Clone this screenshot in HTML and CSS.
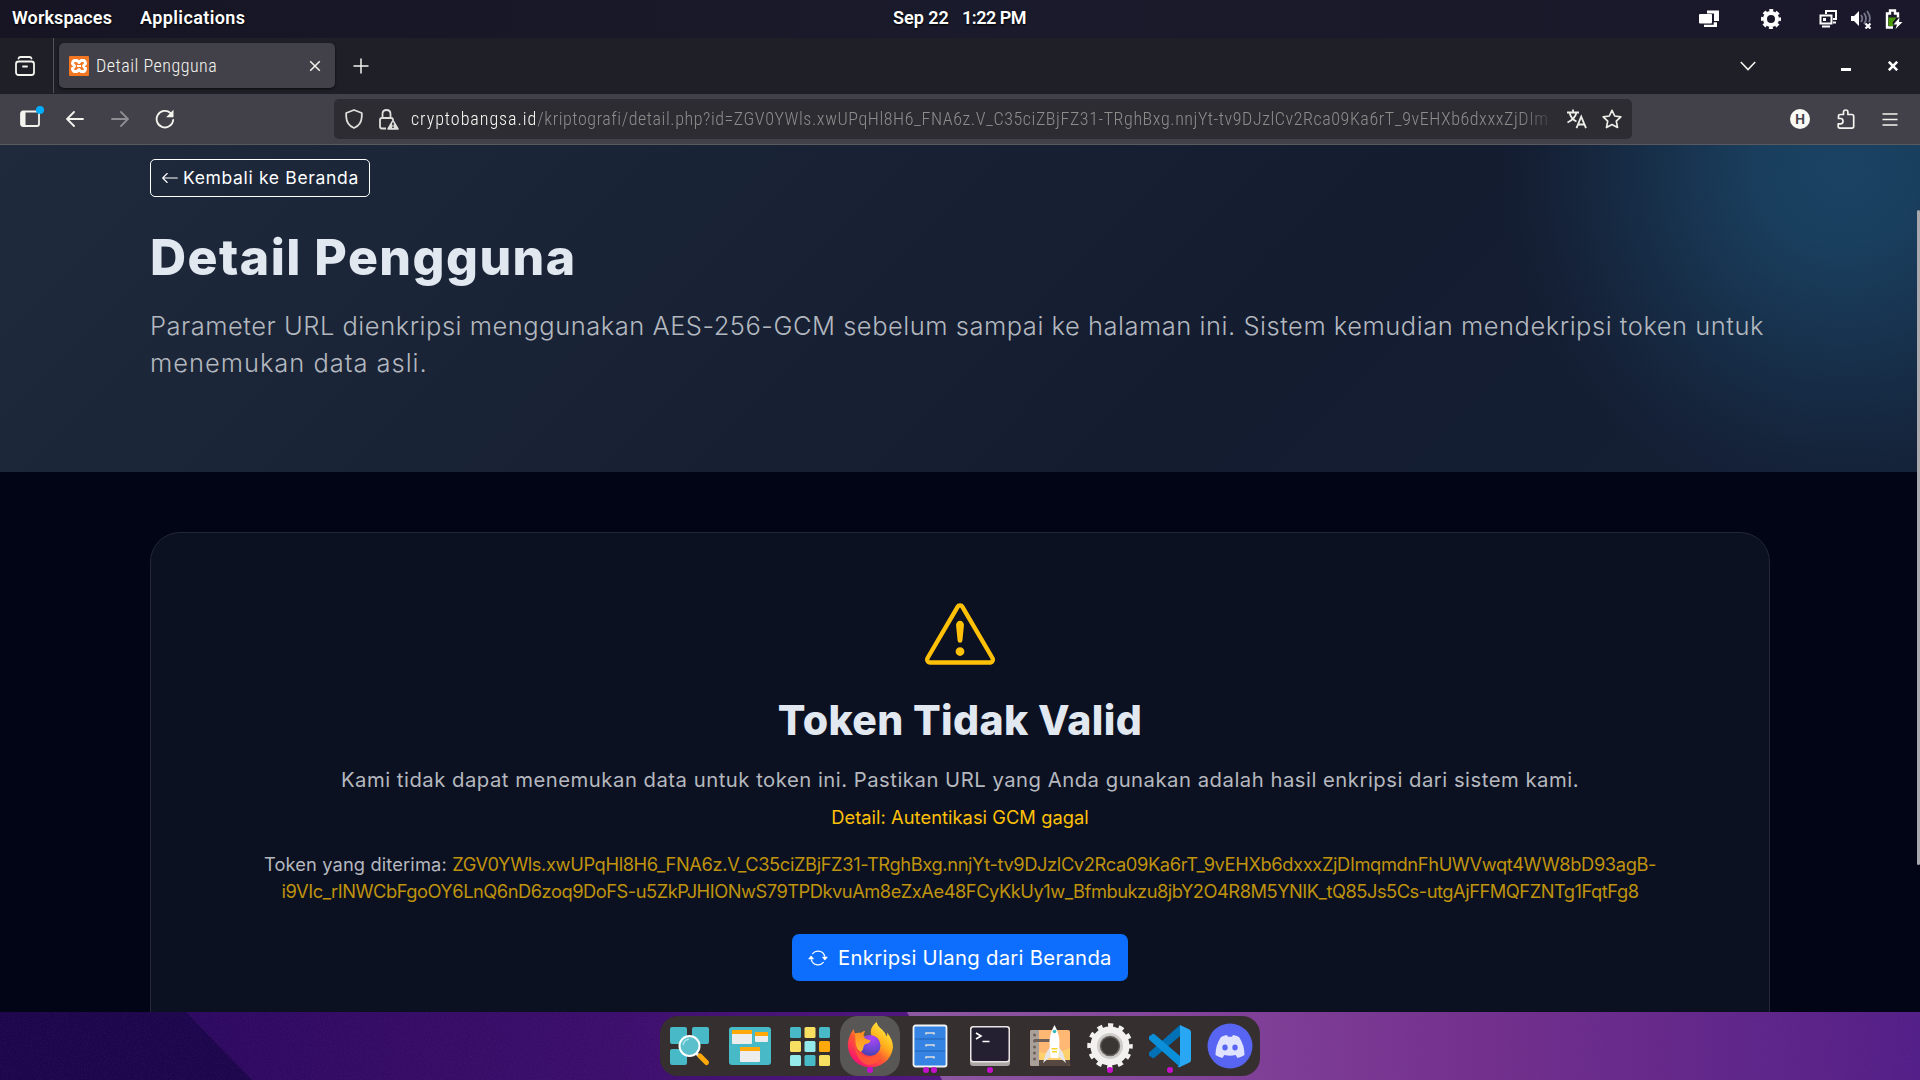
FILE: index.html
```html
<!DOCTYPE html>
<html lang="id">
<head>
<meta charset="utf-8">
<title>Detail Pengguna</title>
<link rel="stylesheet" href="styles.css">
</head>
<body>
<div class="desktop">
  <header class="panel">
    <nav class="panel-menu"><span class="panel-ws">Workspaces</span><span class="panel-apps">Applications</span></nav>
    <div class="panel-clock"><span class="panel-date">Sep 22</span><span class="panel-time">1:22 PM</span></div>
    <div class="panel-tray">
      <svg width="20" height="20" viewBox="0 0 20 20"><path fill="#fff" d="M8 1.500h12v10.500h-5V4.500H8z"/><rect x="0" y="5" width="13" height="9.500" rx="1" fill="#fff"/><path fill="#fff" d="M5 15.700h9.700V13.200H18V18H5z"/></svg>
      <svg class="tray-gear" width="20" height="20" viewBox="0 0 20 20"><circle cx="10" cy="10" r="6" fill="none" stroke="#fff" stroke-width="4"/><circle cx="10" cy="10" r="8.700" fill="none" stroke="#fff" stroke-width="2.600" stroke-dasharray="3.900 2.930" stroke-dashoffset="1.950"/></svg>
      <svg class="tray-net" width="20" height="20" viewBox="0 0 20 20" fill="none" stroke="#fff" stroke-width="2"><path d="M7 5V2h10v8h-3M1.500 6.500h11v8h-11z"/><rect x="4" y="9" width="3" height="3" stroke="none" fill="#fff"/><path d="M3 17.500h8M14 13.500h3"/></svg>
      <svg class="tray-vol" width="20" height="20" viewBox="0 0 20 20"><path fill="#fff" d="M0 7h3l5-5v15l-5-5H0z"/><g fill="none" stroke="#77758a" stroke-width="1.800"><path d="M10 6q2.500 3.500 0 7M13 4q4 5.500 0 11M16 2q4.500 6 2 11"/></g><path stroke="#fff" stroke-width="2.200" d="m14.500 14.500 5 5m0-5-5 5"/></svg>
      <svg class="tray-bat" width="20" height="20" viewBox="0 0 20 20"><path fill="none" stroke="#fff" stroke-width="2.400" d="M9 18.500H3v-14h3V1.500h5v3h3v4"/><path fill="#4a9a08" d="M4.500 8.500h8l-4 5 1 3.500h-5z"/><path fill="#fff" d="m15.500 8.500-6 7h3.500L11.500 20l7-7H15z"/></svg>
    </div>
  </header>

  <main class="browser">
    <div class="tabbar">
      <div class="tab-view"><svg width="20" height="20" viewBox="0 0 20 20" fill="none" stroke="#f4f4ee" stroke-width="1.800" stroke-linecap="round"><rect x="1" y="5.500" width="18" height="13.500" rx="2.500"/><path d="M3.500 2.500q.5-1.500 2-1.500h9q1.500 0 2 1.500M8 10.500h4"/></svg></div>
      <div class="tab">
        <svg width="20" height="20" viewBox="0 0 20 20"><rect width="20" height="20" rx="1" fill="#f37623"/><path fill="none" stroke="#fff" stroke-width="3" stroke-linejoin="round" d="M5 4.500h3l2 2 2-2h3q1.500 1 1.500 3L14.500 10l2 2.500q0 2-1.500 3h-3l-2-2-2 2H5q-1.500-1-1.500-3l2-2.500-2-2.500q0-2 1.500-3z"/><path stroke="#fff" stroke-width="2" d="M8 10h4"/></svg>
        <span class="tab-title">Detail Pengguna</span>
        <svg width="12" height="12" viewBox="0 0 12 12" stroke="#f4f4ee" stroke-width="1.500"><path d="m1.200 1.200 9.600 9.600m0-9.600-9.600 9.600"/></svg>
      </div>
      <svg class="tab-new" width="16" height="16" viewBox="0 0 16 16" stroke="#f4f4ee" stroke-width="1.500"><path d="M8 .5v15M.5 8h15"/></svg>
      <div class="window-controls">
        <svg width="16" height="10" viewBox="0 0 16 10" fill="none" stroke="#f4f4ee" stroke-width="1.600"><path d="m.8 1 7.200 7.500L15.200 1"/></svg>
        <svg class="minimize" width="10" height="3"><rect width="10" height="3" fill="#fff"/></svg>
        <svg width="10" height="10" viewBox="0 0 10 10" stroke="#fff" stroke-width="2.600"><path d="m.8.8 8.400 8.400m0-8.400L.8 9.200"/></svg>
      </div>
    </div>

    <div class="toolbar">
      <svg class="tool-side" width="25" height="22" viewBox="0 0 25 22"><rect x="1" y="5.500" width="18" height="14.500" rx="2" fill="none" stroke="#f4f4ee" stroke-width="1.800"/><path fill="#f4f4ee" d="M1 6h4.500v14H1z"/><circle cx="20" cy="4" r="4" fill="#00adff"/></svg>
      <svg class="tool-back" width="18" height="18" viewBox="0 0 18 18" fill="none" stroke="#f4f4ee" stroke-width="1.800" stroke-linecap="round"><path d="M17 9H1.500M8 2 1 9l7 7"/></svg>
      <svg class="tool-forward" width="18" height="18" viewBox="0 0 18 18" fill="none" stroke="#8e8d91" stroke-width="1.800" stroke-linecap="round"><path d="M1 9h15.500M10 2l7 7-7 7"/></svg>
      <svg class="tool-reload" width="20" height="20" viewBox="0 0 20 20"><path fill="none" stroke="#f4f4ee" stroke-width="1.800" stroke-linecap="round" d="M18.200 11A8.300 8.300 0 1 1 15.500 4"/><path fill="#f4f4ee" d="M18.500.8v7.400h-7.400z"/></svg>
      <div class="urlbar">
        <svg width="18" height="20" viewBox="0 0 18 20" fill="none" stroke="#dededb" stroke-width="1.800" stroke-linejoin="round"><path d="m9 1 7.800 3v3.500Q16.500 16 9 19 1.500 16 1.200 7.500V4z"/></svg>
        <svg class="url-lock" width="20" height="21" viewBox="0 0 20 21"><path fill="none" stroke="#dededb" stroke-width="1.800" d="M3.500 9.500V5q0-4 4-4t4 4v4.500M7 19.500H3q-2 0-2-2V11q0-2 2-2h9q2 0 2 2"/><path fill="#dededb" stroke="#dededb" stroke-width="1.500" stroke-linejoin="round" d="m14 11.500 5 8.500H9z"/><path stroke="#2d2c33" stroke-width="1.600" d="M14 13.500v3m0 1v1.500"/></svg>
        <div class="url"><span class="url-host">cryptobangsa.id</span><span class="url-path">/kriptografi/detail.php?id=ZGV0YWls.xwUPqHl8H6_FNA6z.V_C35ciZBjFZ31-TRghBxg.nnjYt-tv9DJzlCv2Rca09Ka6rT_9vEHXb6dxxxZjDIm</span></div>
        <svg class="url-translate" width="20" height="20" viewBox="0 0 20 20" fill="none" stroke="#eeeee8" stroke-width="1.800"><path d="M0 3.500h12M6 .5v3M2.500 3.500Q4 10 9.500 12.500M9.500 3.500Q8 10 .5 13.500M9.500 19.200l4.700-11.500L19 19.200M11 15.500h6.500"/></svg>
        <svg width="20" height="20" viewBox="0 0 20 20" fill="none" stroke="#eeeee8" stroke-width="1.700" stroke-linejoin="round"><path d="m10 1.300 2.700 5.700 6.100.8-4.500 4.300 1.200 6.400-5.500-3-5.500 3 1.200-6.400L1.200 7.800 7.300 7z"/></svg>
      </div>
      <div class="tool-right">
        <svg width="20" height="20" viewBox="0 0 20 20"><circle cx="10" cy="10" r="10" fill="#fafaf4"/><text class="avatar" x="10" y="14.500" text-anchor="middle">H</text></svg>
        <svg class="tool-ext" width="18" height="20" viewBox="0 0 18 20" fill="none" stroke="#f4f4ee" stroke-width="1.700" stroke-linejoin="round"><path d="M1.500 9.500V7Q1.500 5.500 3 5.500h3.500V3.300q0-2.300 2.200-2.300t2.200 2.300v2.200h4q1.800 0 1.800 1.800v9.900q0 1.900-1.800 1.900H3q-1.800 0-1.800-1.900v-2.400h2.500q2.300 0 2.300-2.600T3.700 9.500z"/></svg>
        <svg width="16" height="13" viewBox="0 0 16 13" stroke="#f4f4ee" stroke-width="1.500"><path d="M.5 1h15m-15 5.500h15M.5 12h15"/></svg>
      </div>
    </div>

    <div class="viewport">
      <div class="page">
        <section class="hero">
          <a class="btn-back"><svg width="18" height="18" viewBox="0 0 16 16" fill="#fff"><path fill-rule="evenodd" d="M15 8a.5.5 0 0 0-.5-.5H2.707l3.147-3.146a.5.5 0 1 0-.708-.708l-4 4a.5.5 0 0 0 0 .708l4 4a.5.5 0 0 0 .708-.708L2.707 8.500H14.500A.5.5 0 0 0 15 8"/></svg><span>Kembali ke Beranda</span></a>
          <h1>Detail Pengguna</h1>
          <p class="lead"><span class="lead-first">Parameter URL dienkripsi menggunakan AES-256-GCM sebelum sampai ke halaman ini. Sistem kemudian mendekripsi token untuk</span><br>menemukan data asli.</p>
        </section>
        <section class="card">
          <svg class="warning" width="70" height="70" viewBox="0 0 16 16" fill="#ffc107"><path d="M7.938 2.016A.13.13 0 0 1 8.002 2a.13.13 0 0 1 .063.016.15.15 0 0 1 .054.057l6.857 11.667c.036.060.035.124.002.183a.2.2 0 0 1-.054.060.1.1 0 0 1-.066.017H1.146a.1.1 0 0 1-.066-.017.2.2 0 0 1-.054-.060.18.18 0 0 1 .002-.183L7.884 2.073a.15.15 0 0 1 .054-.057m1.044-.450a1.130 1.130 0 0 0-1.960 0L.165 13.233c-.457.778.091 1.767.980 1.767h13.713c.889 0 1.438-.990.980-1.767z"/><path d="M7.002 12a1 1 0 1 1 2 0 1 1 0 0 1-2 0M7.100 5.995a.905.905 0 1 1 1.800 0l-.350 3.507a.552.552 0 0 1-1.100 0z"/></svg>
          <h2>Token Tidak Valid</h2>
          <p class="message">Kami tidak dapat menemukan data untuk token ini. Pastikan URL yang Anda gunakan adalah hasil enkripsi dari sistem kami.</p>
          <p class="reason">Detail: Autentikasi GCM gagal</p>
          <p class="token"><span class="token-label">Token yang diterima: </span>ZGV0YWls.xwUPqHl8H6_FNA6z.V_C35ciZBjFZ31-TRghBxg.nnjYt-tv9DJzlCv2Rca09Ka6rT_9vEHXb6dxxxZjDImqmdnFhUWVwqt4WW8bD93agB-<br><span class="token-rest">i9VIc_rINWCbFgoOY6LnQ6nD6zoq9DoFS-u5ZkPJHIONwS79TPDkvuAm8eZxAe48FCyKkUy1w_Bfmbukzu8jbY2O4R8M5YNIK_tQ85Js5Cs-utgAjFFMQFZNTg1FqtFg8</span></p>
          <a class="btn-primary"><svg width="20" height="20" viewBox="0 0 16 16" fill="#fff"><path d="M11.534 7h3.932a.250.250 0 0 1 .192.410l-1.966 2.360a.250.250 0 0 1-.384 0l-1.966-2.360a.250.250 0 0 1 .192-.410m-11 2h3.932a.250.250 0 0 0 .192-.410L2.692 6.230a.250.250 0 0 0-.384 0L.342 8.590A.250.250 0 0 0 .534 9"/><path fill-rule="evenodd" d="M8 3c-1.552 0-2.940.707-3.857 1.818a.5.5 0 1 1-.771-.636A6.002 6.002 0 0 1 13.917 7H12.900A5 5 0 0 0 8 3M3.100 9a5.002 5.002 0 0 0 8.757 2.182.5.5 0 1 1 .771.636A6.002 6.002 0 0 1 2.083 9z"/></svg><span>Enkripsi Ulang dari Beranda</span></a>
        </section>
      </div>
      <div class="scrollbar"></div>
    </div>
  </main>

  <footer class="wallpaper">
    <svg class="wallpaper-art" width="1920" height="68" viewBox="0 0 1920 68">
      <defs>
        <linearGradient id="wallMid"><stop offset="0" stop-color="#2d0860"/><stop offset=".55" stop-color="#3b0d6c"/><stop offset="1" stop-color="#521680"/></linearGradient>
        <linearGradient id="wallEnd"><stop offset="0" stop-color="#9059a3"/><stop offset=".3" stop-color="#83429a"/><stop offset=".58" stop-color="#722f8d"/><stop offset="1" stop-color="#531e88"/></linearGradient>
        <filter id="grain" x="0" y="0" width="100%" height="100%" color-interpolation-filters="sRGB"><feTurbulence type="fractalNoise" baseFrequency=".7" numOctaves="2"/><feColorMatrix values="0 0 0 0 .4  0 0 0 0 .3  0 0 0 0 .5  0 0 0 .25 -.09"/></filter>
      </defs>
      <rect width="1920" height="68" fill="#1c054b"/>
      <path d="M186 0h722l34 68H252z" fill="url(#wallMid)"/>
      <path d="M907 0h1013v68H942z" fill="url(#wallEnd)"/>
      <rect width="1920" height="68" filter="url(#grain)"/>
    </svg>
    <div class="dock">
      <div class="dock-item"><svg width="48" height="48" viewBox="0 0 48 48"><g fill="#48b9c7"><rect x="4" y="5" width="17" height="17" rx="2"/><rect x="26" y="5" width="17" height="17" rx="2"/><rect x="4" y="27" width="17" height="16" rx="2"/></g><path stroke="#e9e9e9" stroke-width="3" d="m30 31 4 4"/><path stroke="#ffa90a" stroke-width="5" stroke-linecap="round" d="m34 34 6.500 6.500"/><circle cx="23.500" cy="24" r="10" fill="#5bc0cb" stroke="#fff" stroke-width="2"/><path fill="none" stroke="#a6e2e8" stroke-width="1.500" d="M17 23q1-5 6-6"/></svg></div>
      <div class="dock-item"><svg width="48" height="48" viewBox="0 0 48 48"><rect x="3" y="5" width="42" height="38" rx="3" fill="#48b9c7"/><g fill="#ededed"><rect x="6" y="8" width="20" height="14" rx="1"/><rect x="29" y="10" width="13" height="10" rx="1"/><rect x="14" y="25" width="20" height="15" rx="1"/></g><path fill="#ffa90a" d="M6 8h20v4H6zm23 2h13v4H29zM14 25h20v4H14z"/></svg></div>
      <div class="dock-item"><svg width="48" height="48" viewBox="0 0 48 48"><g fill="#48b9c7"><rect x="4" y="5" width="11" height="11" rx="1.500"/><rect x="33" y="5" width="11" height="11" rx="1.500"/><rect x="18.500" y="33" width="11" height="11" rx="1.500"/></g><g fill="#f7df62"><rect x="18.500" y="5" width="11" height="11" rx="1.500"/><rect x="4" y="19" width="11" height="11" rx="1.500"/><rect x="33" y="33" width="11" height="11" rx="1.500"/></g><g fill="#94eaea"><rect x="18.500" y="19" width="11" height="11" rx="1.500"/><rect x="4" y="33" width="11" height="11" rx="1.500"/></g><rect x="33" y="19" width="11" height="11" rx="1.500" fill="#ffa90a"/></svg></div>
      <div class="dock-item active"><svg width="48" height="48" viewBox="0 0 48 48">
        <defs>
          <linearGradient id="foxBody" x1=".85" y1=".1" x2=".2" y2=".9"><stop offset="0" stop-color="#ffe83d"/><stop offset=".35" stop-color="#ffae1c"/><stop offset=".62" stop-color="#ff5634"/><stop offset="1" stop-color="#f5146f"/></linearGradient>
          <radialGradient id="foxGlobe" cx=".6" cy=".15" r=".9"><stop offset="0" stop-color="#ae45f5"/><stop offset=".6" stop-color="#6f46d5"/><stop offset="1" stop-color="#413fa8"/></radialGradient>
          <linearGradient id="foxHead" x2="0" y2="1"><stop offset="0" stop-color="#ff8a1f"/><stop offset="1" stop-color="#ffb62b"/></linearGradient>
        </defs>
        <path fill="url(#foxBody)" d="M30.500 0q1 4 5.500 7.500 3 2.500 4.500 7 1-1 .5-4 6 7 6 15A22.500 22.500 0 1 1 2 20Q3.500 12 8 7q0 3 1 4.500 3-1 6-.5 2-2 4-2-2 3-2 5l9 1q-4-8 4.500-15z"/>
        <circle cx="24" cy="23.500" r="10.500" fill="url(#foxGlobe)"/>
        <path fill="url(#foxHead)" d="M9 11.500q4-1 7-.5 1.500-1.500 3-2-2 3-1.500 6 3 3 7 3.500-.5 2.500-5 3.500-2 1-2 3 0 3-3 5-5-4-5-10z"/>
        <path fill="#ff5a32" opacity=".8" d="M8 17q1 14 12 18 10 2 15-5-1 12-12 13Q9 41 8 17z"/>
      </svg><i class="dots"><b></b></i></div>
      <div class="dock-item"><svg width="48" height="48" viewBox="0 0 48 48"><rect x="7.500" y="3.500" width="33" height="41" rx="2" fill="#3584e4" stroke="#f3f3f3" stroke-width="1.800"/><path stroke="#2163b5" stroke-width="1" d="M9 17h30M9 29h30"/><g fill="none" stroke="#dcdcdc" stroke-width="1.600"><path d="M20 12.500V11h8v1.500M20 24.500V23h8v1.500M20 36.500V35h8v1.500"/></g></svg><i class="dots"><b></b><b></b></i></div>
      <div class="dock-item"><svg width="48" height="48" viewBox="0 0 48 48"><rect x="4" y="5" width="40" height="39" rx="3" fill="#aaa7a4"/><rect x="4" y="4" width="40" height="36.500" rx="3" fill="#e8e5e4"/><rect x="5.500" y="5.500" width="37" height="33.500" rx="2" fill="#241f31"/><path fill="none" stroke="#fff" stroke-width="1.600" d="m10 11 5 3-5 3M16.500 19.500h7"/></svg><i class="dots"><b></b></i></div>
      <div class="dock-item"><svg width="48" height="48" viewBox="0 0 48 48"><rect x="4" y="8" width="40" height="36" rx="2" fill="#ffb774"/><path fill="#ffd06d" d="M13 30q16 3 31-4v14H13z"/><path fill="#564840" d="M13 38h31v4q0 2-2 2H13z"/><path fill="#aaa09a" d="M6 8h7v36H6q-2 0-2-2V10q0-2 2-2z"/><g fill="#6e6059"><circle cx="8.500" cy="13" r="1.500"/><circle cx="8.500" cy="19" r="1.500"/><circle cx="8.500" cy="25" r="1.500"/><circle cx="8.500" cy="31" r="1.500"/><circle cx="8.500" cy="37" r="1.500"/><path d="M8 17h17v3H8z"/></g><path fill="#e6e6e6" d="m24 25-4 6-3 10 7-6zm9 0 4 6 3 10-7-6z"/><path fill="#fff" d="M28.500 3q5 9 5 17l-1 16h-8l-1-16q0-8 5-17z"/><circle cx="28.500" cy="9.500" r="1.800" fill="#34b7bd"/><path fill="#f6d32d" d="M25.500 26h6v1.500h-6zm.5 3h5v1.500h-5z"/></svg></div>
      <div class="dock-item"><svg width="48" height="48" viewBox="0 0 48 48"><circle cx="24" cy="24" r="14.500" fill="none" stroke="#f2f1ef" stroke-width="10"/><circle cx="24" cy="24" r="20.500" fill="none" stroke="#f2f1ef" stroke-width="4.500" stroke-dasharray="5.200 5.533" stroke-dashoffset="2.600"/><circle cx="24" cy="24" r="11.500" fill="none" stroke="#cfcdca" stroke-width="3"/><circle cx="24" cy="24" r="9.500" fill="#3a3634" stroke="#65615d" stroke-width="1.500"/></svg><i class="dots"><b></b></i></div>
      <div class="dock-item"><svg width="48" height="48" viewBox="0 0 48 48"><path fill="#0070b7" d="M34 3 3 30.500v3l3.500 2.500q1 .5 2-.3L34 14z"/><path fill="#0a8fd8" d="M34 45 3 17.500v-3L6.500 12q1-.5 2 .3L34 34z"/><path fill="#27a7f4" d="m34 3 9.500 4.500Q45 8.500 45 10v28q0 1.500-1.500 2.500L34 45q-1 .5-2.500-.5L34 43z"/></svg><i class="dots"><b></b></i></div>
      <div class="dock-item"><svg width="48" height="48" viewBox="0 0 48 48"><circle cx="24" cy="24" r="22.500" fill="#5865f2"/><path fill="#e0e3ff" fill-rule="evenodd" d="M15 15q3-1.700 6-2l1 1.700h4L27 13q3 .3 6 2 5.500 8 5.500 18-3 2-7 3l-1.800-3q-5.700 1.500-11.400 0l-1.800 3q-4-1-7-3 0-10 5.500-18zm4 7.500a2.700 3 0 1 0 .01 6 2.700 3 0 1 0 0-6m10 0a2.700 3 0 1 0 .01 6 2.700 3 0 1 0 0-6"/></svg></div>
    </div>
  </footer>
</div>
</body>
</html>
```
FILE: styles.css
```css
* { box-sizing: border-box; }
body { margin: 0; background: #1a1a2a; overflow: hidden; }
h1, h2, p { margin: 0; }
svg { display: block; flex: none; }

.desktop {
  width: 1920px;
  height: 1080px;
  display: flex;
  flex-direction: column;
  font-family: Roboto, sans-serif;
}

/* system panel */
.panel {
  height: 38px;
  display: grid;
  grid-template-columns: 1fr auto 1fr;
  align-items: center;
  padding: 0 16px 0 12px;
  background: linear-gradient(90deg, #171524, #191a2b 50%, #1a182a);
  color: #fff;
  font-size: 18px;
  font-weight: 600;
  line-height: 34px;
  text-shadow: 0 1px 2px #000;
  white-space: nowrap;
}
.panel-menu { display: flex; gap: 28px; padding-bottom: 2px; }
.panel-ws { width: 100px; letter-spacing: .09px; }
.panel-apps { letter-spacing: .4px; }
.panel-clock { display: flex; gap: 14px; padding: 0 0 2px 1px; }
.panel-date { width: 55px; }
.panel-time { width: 62px; letter-spacing: -.5px; }
.panel-tray { display: flex; justify-content: flex-end; align-items: center; }
.tray-gear { margin-left: 42px; }
.tray-net { margin-left: 38px; }
.tray-vol { margin-left: 12px; }
.tray-bat { margin-left: 13px; }

/* browser chrome */
.browser { height: 974px; display: flex; flex-direction: column; }
.tabbar {
  height: 56px;
  display: flex;
  align-items: center;
  background: #1f1f28;
}
.tab-view {
  width: 54px;
  height: 55px;
  align-self: flex-start;
  display: flex;
  align-items: center;
  padding-left: 15px;
  border-right: 1px solid #52525a;
}
.tab {
  width: 276px;
  height: 45px;
  margin: 0 0 1px 5px;
  display: flex;
  align-items: center;
  gap: 7px;
  padding: 0 14px 0 10px;
  border-radius: 5px;
  background: #42414a;
  box-shadow: 0 1px 3px #000a;
}
.tab-title {
  flex: 1;
  font-size: 18px;
  font-stretch: 75%;
  font-weight: 350;
  letter-spacing: .5px;
  color: #f6f6f0;
}
.tab-new { margin-left: 18px; }
.window-controls {
  margin-left: auto;
  display: flex;
  align-items: center;
  padding-right: 22px;
}
.minimize { margin: 7px 37px 0 85px; }

.toolbar {
  height: 51px;
  display: flex;
  align-items: center;
  background: #42414a;
  border-bottom: 1px solid #5a595f;
}
.tool-side { margin: 0 0 4px 20px; }
.tool-back { margin-left: 21px; }
.tool-forward { margin-left: 27px; }
.tool-reload { margin-left: 26px; }
.urlbar {
  width: 1298px;
  height: 40px;
  margin-left: 159px;
  display: flex;
  align-items: center;
  padding: 0 10px 0 11px;
  border-radius: 5px;
  background: #2d2c33;
}
.url-lock { margin-left: 16px; }
.url {
  width: 1148px;
  margin: 0 0 1px 12px;
  white-space: nowrap;
  font-size: 18px;
  font-stretch: 75%;
  font-weight: 350;
  color: #8e8d8c;
  mask-image: linear-gradient(90deg, #000 96.500%, transparent);
}
.url-host { color: #fafaf4; letter-spacing: .95px; }
.url-path { letter-spacing: .56px; }
.url-translate { margin: 0 15px 0 8px; }
.tool-right {
  margin-left: auto;
  display: flex;
  align-items: center;
  padding-right: 22px;
}
.tool-ext { margin: 0 27px; }
.avatar { font: 700 13px "Inter", sans-serif; fill: #42414a; }

/* web page */
.viewport {
  flex: 1;
  position: relative;
  overflow: hidden;
  background: #020515;
}
.page { font-family: "Inter", sans-serif; color: #e2e8f0; }
.hero {
  height: 327px;
  padding: 14px 150px 0;
  background:
    radial-gradient(circle at 1840px 20px, rgba(38, 136, 190, .34) 0, rgba(38, 136, 190, .31) 80px, rgba(38, 136, 190, .14) 210px, rgba(38, 136, 190, .03) 300px, transparent 345px),
    linear-gradient(135deg, #1f2a3c, #141c30 65%, #142036);
}
.btn-back {
  width: 220px;
  height: 38px;
  display: flex;
  align-items: center;
  gap: 4px;
  padding: 0 0 1px 10px;
  border: 1px solid #fff;
  border-radius: 5px;
  color: #fff;
  font-size: 17.5px;
  letter-spacing: .66px;
  white-space: nowrap;
}
.hero h1 {
  margin-top: 30px;
  font-size: 50px;
  line-height: 60px;
  font-weight: 800;
  letter-spacing: 1.45px;
}
.lead {
  margin-top: 20px;
  font-size: 25.5px;
  line-height: 37px;
  font-weight: 300;
  letter-spacing: .97px;
  color: #b3b8bf;
  white-space: nowrap;
}
.lead-first { letter-spacing: .519px; }

.card {
  width: 1620px;
  height: 560px;
  margin: 60px auto 0;
  display: flex;
  flex-direction: column;
  align-items: center;
  padding-top: 66px;
  border: 1px solid #232837;
  border-radius: 30px;
  background: #0c1122;
  white-space: nowrap;
  text-align: center;
}
.card h2 {
  margin-top: 26px;
  font-size: 41px;
  line-height: 50px;
  font-weight: 800;
  letter-spacing: .35px;
}
.message {
  margin-top: 20px;
  font-size: 20.3px;
  line-height: 30px;
  letter-spacing: .5px;
  color: #b5b8be;
}
.reason {
  margin-top: 9px;
  font-size: 18.3px;
  line-height: 27px;
  letter-spacing: .05px;
  color: #ffc107;
}
.token {
  margin-top: 20px;
  font-size: 18.3px;
  line-height: 26.5px;
  letter-spacing: -.376px;
  color: #bf930d;
}
.token-label { letter-spacing: .13px; color: #b5b8be; }
.token-rest { letter-spacing: -.478px; }
.btn-primary {
  width: 336px;
  height: 47px;
  margin-top: 30px;
  display: flex;
  align-items: center;
  gap: 10px;
  padding-left: 16px;
  border-radius: 7px;
  background: #0d6efd;
  color: #fff;
  font-size: 20.3px;
  letter-spacing: .3px;
}
.scrollbar {
  position: absolute;
  right: 0;
  top: 65px;
  width: 3px;
  height: 655px;
  border-radius: 2px;
  background: #a8a8ad;
}

/* desktop background and dock */
.wallpaper {
  position: relative;
  height: 68px;
  padding-top: 4px;
}
.wallpaper-art { position: absolute; inset: 0; }
.dock {
  position: relative;
  width: 600px;
  height: 60px;
  margin: 0 auto;
  display: flex;
  border-radius: 18px;
  background: #35302f;
}
.dock-item {
  position: relative;
  width: 60px;
  height: 60px;
  display: flex;
  justify-content: center;
  padding-top: 6px;
  border-radius: 18px;
}
.dock-item.active { background: #595756; }
.dots {
  position: absolute;
  left: 0;
  right: 0;
  bottom: 3px;
  display: flex;
  justify-content: center;
  gap: 2px;
}
.dots b { width: 6px; height: 6px; border-radius: 50%; background: #c512c9; }
```
